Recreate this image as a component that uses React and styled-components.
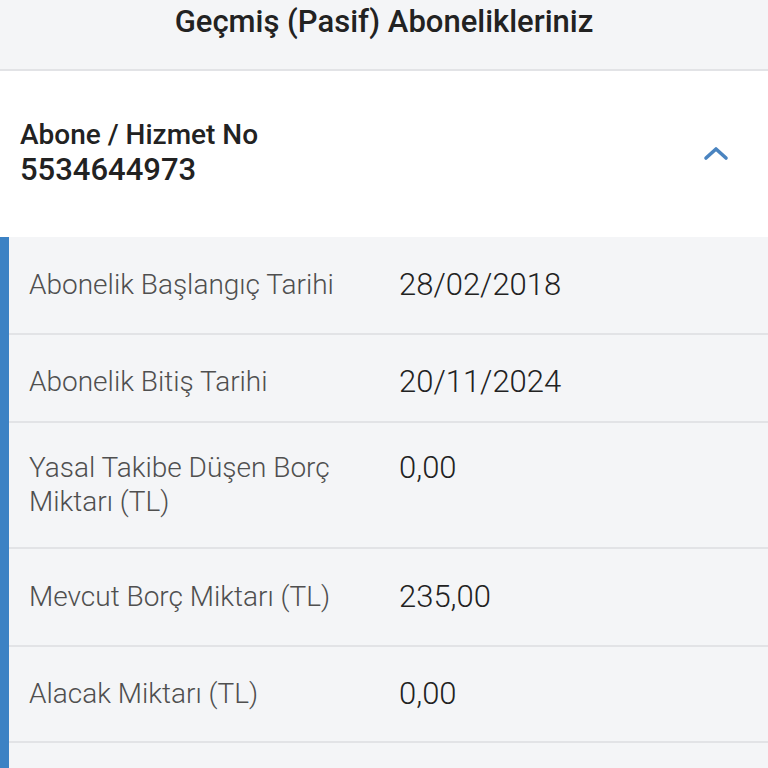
import styled, { createGlobalStyle } from 'styled-components';

const GlobalStyle = createGlobalStyle`
  html, body {
    margin: 0;
    padding: 0;
    background: #f4f5f7;
    font-family: Roboto, "Noto Sans", sans-serif;
    overflow: hidden;
  }
`;

const Page = styled.div`
  width: 768px;
  height: 768px;
  overflow: hidden;
  background: #f4f5f7;
`;

const TopBar = styled.header`
  height: 69px;
  border-bottom: 2px solid #e2e3e6;
  display: flex;
  justify-content: center;
  align-items: flex-start;
`;

const Title = styled.h1`
  margin: 0;
  margin-top: 3px;
  font-size: 31px;
  line-height: 38px;
  font-weight: 500;
  color: #222;
`;

const CardHead = styled.div`
  height: 166px;
  background: #fff;
  display: flex;
  align-items: center;
  justify-content: space-between;
  padding: 0 39px 0 20px;
`;

const HeadText = styled.div`
  display: flex;
  flex-direction: column;
  margin-top: -3px;
`;

const HeadLabel = styled.span`
  font-size: 28px;
  line-height: 34px;
  font-weight: 500;
  color: #222;
`;

const HeadNumber = styled.span`
  font-size: 31px;
  line-height: 36px;
  font-weight: 500;
  color: #222;
`;

const Chevron = styled.svg`
  width: 26px;
  height: 20px;
  margin-top: -2px;
`;

const Details = styled.div`
  border-left: 9px solid #3c82c4;
`;

const Row = styled.div`
  display: grid;
  grid-template-columns: 390px 1fr;
  padding: ${p => `${p.$top}px 0 ${p.$bottom}px`};
  border-bottom: 2px solid #e2e3e6;
`;

const Label = styled.div`
  padding-left: 20px;
  padding-right: 30px;
  font-size: 28px;
  line-height: 34px;
  font-weight: 300;
  color: #4f4f4f;
`;

const Value = styled.div`
  font-size: 31px;
  line-height: 34px;
  font-weight: 300;
  color: #222;
`;

const rows = [
  { label: 'Abonelik Başlangıç Tarihi', value: '28/02/2018', top: 31, bottom: 31 },
  { label: 'Abonelik Bitiş Tarihi', value: '20/11/2024', top: 30, bottom: 22 },
  { label: 'Yasal Takibe Düşen Borç Miktarı (TL)', value: '0,00', top: 28, bottom: 28 },
  { label: 'Mevcut Borç Miktarı (TL)', value: '235,00', top: 31, bottom: 31 },
  { label: 'Alacak Miktarı (TL)', value: '0,00', top: 30, bottom: 30 },
  { label: '', value: '', top: 30, bottom: 30 },
];

const App = () => (
  <Page>
    <GlobalStyle />
    <TopBar>
      <Title>Geçmiş (Pasif) Abonelikleriniz</Title>
    </TopBar>
    <CardHead>
      <HeadText>
        <HeadLabel>Abone / Hizmet No</HeadLabel>
        <HeadNumber>5534644973</HeadNumber>
      </HeadText>
      <Chevron viewBox="0 0 26 20">
        <path d="M3 15 L13 6 L23 15" fill="none" stroke="#4a84c0" strokeWidth="3.6" strokeLinecap="round" strokeLinejoin="round" />
      </Chevron>
    </CardHead>
    <Details>
      {rows.map((r, i) => (
        <Row key={i} $top={r.top} $bottom={r.bottom}>
          <Label>{r.label}</Label>
          <Value>{r.value}</Value>
        </Row>
      ))}
    </Details>
  </Page>
);

export default App;
